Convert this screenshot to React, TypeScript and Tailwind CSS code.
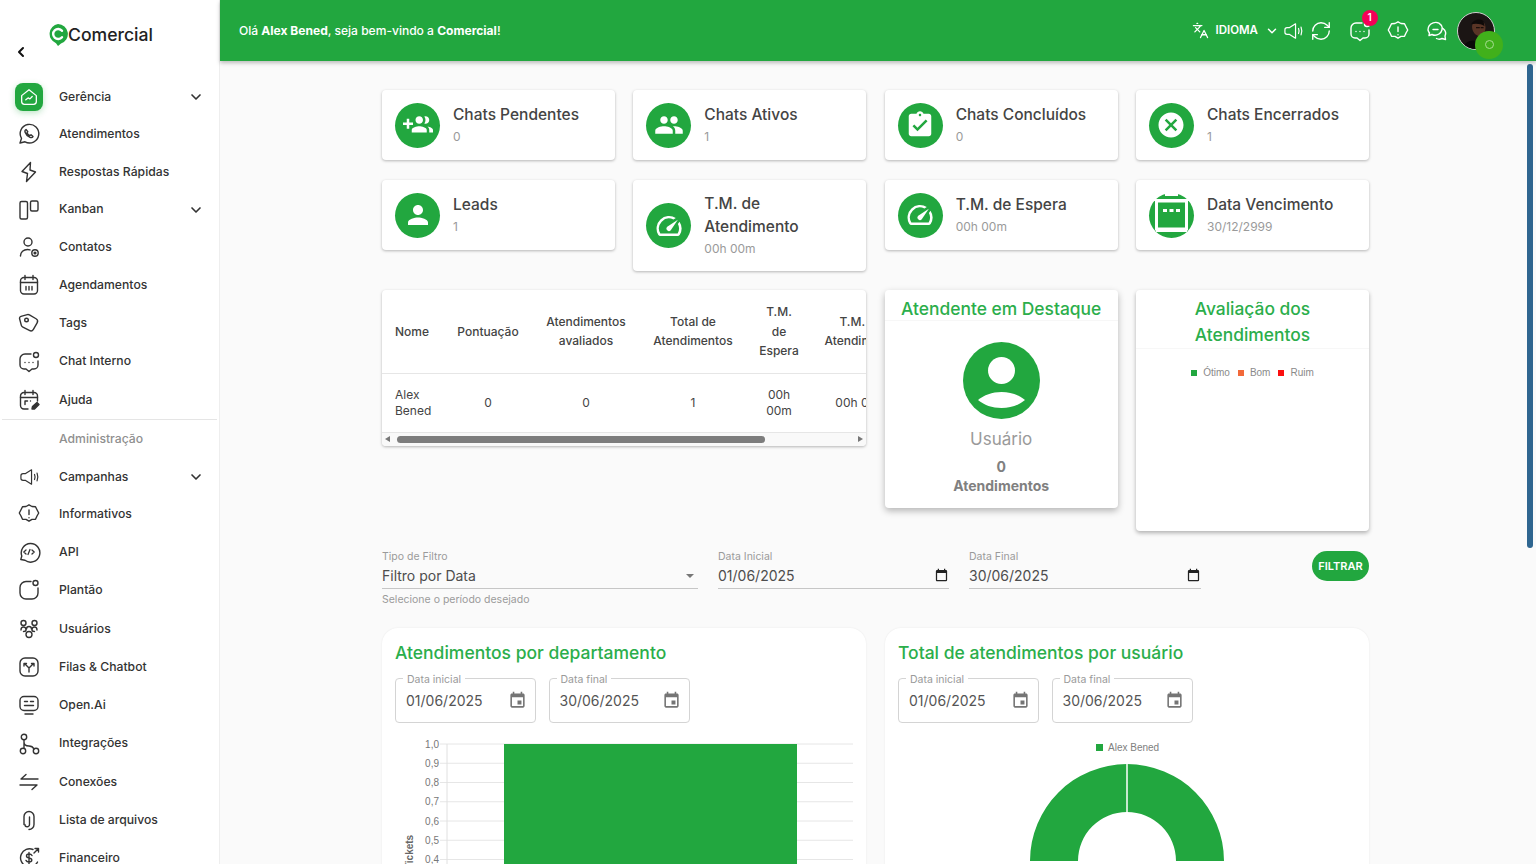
import type { ReactNode } from "react";
import { ChevronDown, ChevronLeft, Languages, RefreshCw } from "lucide-react";

const GREEN = "#22a73f";

function Ico({ children, className = "h-6 w-6 shrink-0" }: { children: ReactNode; className?: string }) {
  return (
    <svg viewBox="0 0 24 24" fill="none" stroke="currentColor" strokeWidth="1.4" strokeLinecap="round" strokeLinejoin="round" className={className}>
      {children}
    </svg>
  );
}

const icons = {
  whatsapp: (
    <Ico>
      <path d="M3 21l1.500-4.600A9.300 9.300 0 1 1 8 19.800L3 21z" />
      <path d="M9 7.500c-1 .6-1.300 1.700-.8 3 .8 2.200 2.600 4 4.800 4.900 1.300.5 2.400.2 3-.8l-2-1.800-1.300.8c-1.200-.6-2.100-1.500-2.700-2.700l.8-1.300L9 7.500z" />
    </Ico>
  ),
  zap: (
    <Ico>
      <path d="M13.500 2.500 5 11.500l5.500 2-1 8 9-9.500-5.500-2 .5-7.500z" />
    </Ico>
  ),
  kanban: (
    <Ico>
      <rect x="3" y="3.500" width="7.500" height="17.500" rx="1.500" />
      <rect x="13.500" y="3" width="7.500" height="10" rx="1.500" />
    </Ico>
  ),
  contact: (
    <Ico>
      <circle cx="11" cy="7" r="4" />
      <path d="M3.500 21c0-3.800 3-6.500 7-6.500 1 0 1.800.1 2.500.4" />
      <circle cx="18" cy="18" r="3.200" />
      <circle cx="18" cy="18" r=".9" fill="currentColor" />
    </Ico>
  ),
  calendar: (
    <Ico>
      <rect x="3.500" y="4.500" width="17" height="16.500" rx="3.500" />
      <path d="M3.500 9.500h17M8 2.500v4M16 2.500v4M9 13.500v3.500M12 13.500v3.500M15 13.500v3.500" />
    </Ico>
  ),
  tag: (
    <Ico>
      <path d="M4 5.500A2 2 0 0 1 6 3.500h6.500a3 3 0 0 1 2 .8l5.400 5.400a3 3 0 0 1 0 4.200l-5.300 5.400a3 3 0 0 1-4.200 0L5 14.500a3 3 0 0 1-1-2.200V5.500z" transform="rotate(-15 12 12)" />
      <circle cx="9.500" cy="9" r="1.800" />
    </Ico>
  ),
  chat: (
    <Ico>
      <path d="M14 4H8a5 5 0 0 0-5 5v6a4 4 0 0 0 4 4h2l3 2.500 3-2.500h2a4 4 0 0 0 4-4v-4" />
      <circle cx="19" cy="5" r="2.500" />
      <path d="M8 12.500h.01M12 12.500h.01M16 12.500h.01" />
    </Ico>
  ),
  help: (
    <Ico>
      <path d="M11 21H7a3.500 3.500 0 0 1-3.500-3.500V8A3.500 3.500 0 0 1 7 4.500h10A3.500 3.500 0 0 1 20.500 8v5" />
      <path d="M3.500 9.500h17M8 2.500v4M16 2.500v4M8 13h2.500M8 13v3.500M13.500 13h.01" />
      <path d="m15 21 .5-2.500 4.500-4 2 2-4.500 4.500-2.500 0z" fill="currentColor" />
    </Ico>
  ),
  speaker: (
    <Ico>
      <g transform="translate(1.800 1.800) scale(.85)">
        <path d="M15 3.500v17l-7-4.500H5a2.500 2.500 0 0 1-2.500-2.500v-3A2.500 2.500 0 0 1 5 8h3l7-4.500z" />
        <path d="M18.500 9c.8 1.800.8 4.200 0 6M21.500 7.500c1.100 2.800 1.100 6.200 0 9" />
      </g>
    </Ico>
  ),
  alert: (
    <Ico>
      <path d="M12 2.800l3 1.700 3.500.2 1.500 3 1.700 3.300-1.700 3-1.500 3.200-3.500.2-3 1.800-3-1.800-3.500-.2-1.500-3.200-1.700-3 1.700-3.300 1.500-3 3.500-.2 3-1.700z" />
      <path d="M12 8v4.500M12 15.800h.01" />
    </Ico>
  ),
  api: (
    <Ico>
      <path d="M3.800 19.500l1-3.500A9.300 9.300 0 1 1 8 20.300l-4.200-.8z" />
      <path d="M9 10l-2.200 2L9 14M15 10l2.200 2-2.200 2M13 9.500l-2 5" strokeWidth="1.300" />
    </Ico>
  ),
  shift: (
    <Ico>
      <path d="M14 3.500H9A6 6 0 0 0 3 9.500v5.500a6 6 0 0 0 6 6h6a6 6 0 0 0 6-6v-5" />
      <circle cx="18.500" cy="5" r="2.500" />
    </Ico>
  ),
  users: (
    <Ico>
      <circle cx="6.500" cy="6" r="2.500" />
      <circle cx="17.500" cy="6" r="2.500" />
      <circle cx="12" cy="17.500" r="3" />
      <path d="M4 13c0-2 1.200-3 2.500-3S9 11 9 13c0 1-1 1.500-2.500 1.500M20 13c0-2-1.200-3-2.500-3S15 11 15 13c0 1 1 1.500 2.500 1.500M9.500 12a2.500 2.500 0 1 1 5 0" />
    </Ico>
  ),
  queues: (
    <Ico>
      <rect x="3" y="3" width="18" height="18" rx="5" />
      <path d="M12 17v-4M12 13 8 9M12 13l4-4M7 11V8.500h2.500M17 11V8.500h-2.500" />
    </Ico>
  ),
  openai: (
    <Ico>
      <rect x="3" y="3.500" width="18" height="14" rx="4" />
      <path d="M7.500 8.500h3M13.500 8.500h3M7.500 12.500h9M8 21h8" />
    </Ico>
  ),
  integrations: (
    <Ico>
      <circle cx="7" cy="5" r="2.700" />
      <circle cx="6" cy="19" r="2.700" />
      <circle cx="19" cy="19" r="2.700" />
      <path d="M7 8v8M7 10c0 3 2 4 5 4 3 0 4 1 5 3" />
    </Ico>
  ),
  connections: (
    <Ico>
      <path d="M21 9H4l5-4.500M3 15h17l-5 4.500" />
    </Ico>
  ),
  clip: (
    <Ico>
      <path d="M12.500 9v7.500a2.300 2.300 0 0 1-4.600 0" />
      <path d="M7 16.500V8.500a5 5 0 0 1 10 0v8a5 5 0 0 1-5 5" />
    </Ico>
  ),
  finance: (
    <Ico>
      <path d="M16 3.500A9 9 0 1 0 20.500 16" />
      <path d="M15 9.500c-.5-1-1.600-1.500-3-1.500-1.500 0-2.500.8-2.500 2s1 1.700 2.500 2 2.800.8 2.800 2-1.200 2-2.800 2c-1.400 0-2.500-.6-3-1.600M12 6.500V18M17 7l4.500-4.500M18 2.500h3.500V6" />
    </Ico>
  ),
};

type NavItem = { label: string; icon: ReactNode; expand?: boolean };

const mainNav: NavItem[] = [
  { label: "Atendimentos", icon: icons.whatsapp },
  { label: "Respostas Rápidas", icon: icons.zap },
  { label: "Kanban", icon: icons.kanban, expand: true },
  { label: "Contatos", icon: icons.contact },
  { label: "Agendamentos", icon: icons.calendar },
  { label: "Tags", icon: icons.tag },
  { label: "Chat Interno", icon: icons.chat },
  { label: "Ajuda", icon: icons.help },
];

const adminNav: NavItem[] = [
  { label: "Campanhas", icon: icons.speaker, expand: true },
  { label: "Informativos", icon: icons.alert },
  { label: "API", icon: icons.api },
  { label: "Plantão", icon: icons.shift },
  { label: "Usuários", icon: icons.users },
  { label: "Filas & Chatbot", icon: icons.queues },
  { label: "Open.Ai", icon: icons.openai },
  { label: "Integrações", icon: icons.integrations },
  { label: "Conexões", icon: icons.connections },
  { label: "Lista de arquivos", icon: icons.clip },
  { label: "Financeiro", icon: icons.finance },
];

function NavRow({ item }: { item: NavItem }) {
  return (
    <div className={item.expand ? "flex h-[36px] items-center pl-[19px] pr-[15px]" : "flex h-[38.3px] items-center pl-[19px] pr-[15px]"}>
      <span className="flex w-5 justify-center text-[#333]">{item.icon}</span>
      <span className="ml-5 flex-1 text-[12.200px] font-medium text-[#333]">{item.label}</span>
      {item.expand && <ChevronDown className="h-4 w-4 text-[#333]" strokeWidth={2.500} />}
    </div>
  );
}

function Sidebar() {
  return (
    <aside className="h-full w-[220px] shrink-0 overflow-hidden border-r border-[#eeeeee] bg-white">
      <div className="h-[79px]">
        <div className="flex items-center pl-[48px] pt-[24px]">
          <svg viewBox="0 0 20 22" className="h-[22px] w-[20px]">
            <path d="M10 0a10 10 0 0 1 3 19.500L10 22l-2-2.800A10 10 0 0 1 10 0z" fill={GREEN} />
            <path d="M14 6.800a5 5 0 1 0 0 6.400" fill="none" stroke="#fff" strokeWidth="2.400" strokeLinecap="round" />
          </svg>
          <span className="text-[17.600px] font-medium leading-[22px] text-[#222]">Comercial</span>
        </div>
        <ChevronLeft className="ml-[13px] mt-[-2px] h-4 w-4 text-[#111]" strokeWidth={3} />
      </div>
      <div className="flex h-[36px] items-center pl-[15px] pr-[15px]">
        <span className="flex h-[28px] w-[28px] items-center justify-center rounded-lg bg-[#22a73f] text-white shadow-[0_2px_6px_rgba(34,167,63,.3)]">
          <Ico className="h-[22px] w-[22px]">
            <path d="M4 10.500 12 4l8 6.500V17a3 3 0 0 1-3 3H7a3 3 0 0 1-3-3v-6.500z" />
            <path d="m8.500 15 2.500-2 2 1 2.500-2.500" />
          </Ico>
        </span>
        <span className="ml-4 flex-1 text-[12.200px] font-medium text-[#333]">Gerência</span>
        <ChevronDown className="h-4 w-4 text-[#333]" strokeWidth={2.500} />
      </div>
      {mainNav.map((item) => (
        <NavRow key={item.label} item={item} />
      ))}
      <div className="mx-[2px] h-px bg-[#e5e5e5]" />
      <div className="flex h-[38.600px] items-center pl-[59px] text-[12.200px] font-medium text-[#8f8f8f]">Administração</div>
      {adminNav.map((item) => (
        <NavRow key={item.label} item={item} />
      ))}
    </aside>
  );
}

function Header() {
  return (
    <header className="relative z-10 flex h-[61px] shrink-0 items-center bg-[#22a73f] pl-[19px] pr-[41px] text-white shadow-[0_2px_4px_rgba(0,0,0,.25)]">
      <p className="flex-1 pt-[1px] text-[12.050px] font-medium">
        Olá <b className="font-bold">Alex Bened</b>, seja bem-vindo a <b className="font-bold">Comercial</b>!
      </p>
      <Languages className="h-[17px] w-[17px]" strokeWidth={1.800} />
      <span className="ml-[7px] text-[11.500px] font-semibold">IDIOMA</span>
      <ChevronDown className="ml-[7px] h-[14px] w-[14px]" strokeWidth={2.500} />
      <span className="ml-[4px] flex w-[19px] justify-center">{icons.speaker}</span>
      <span className="flex w-[38.500px] justify-center">
        <RefreshCw className="h-[22px] w-[22px]" strokeWidth={1.500} />
      </span>
      <span className="relative flex w-[38.500px] justify-center">
        {icons.chat}
        <span className="absolute left-[21px] top-[-9px] flex h-[16px] w-[16px] items-center justify-center rounded-full bg-[#f50057] text-[10px] font-semibold">1</span>
      </span>
      <span className="flex w-[38.500px] justify-center">{icons.alert}</span>
      <span className="flex w-[38.500px] justify-center">
        <Ico>
          <path d="M3 11a7.500 7.500 0 0 1 13.500-4.500C18 9 17 13 14 15c-2.200 1.400-5 1.500-7 .5L4 16.500l.5-2.500A7 7 0 0 1 3 11z" />
          <path d="M8 10.500h5M18 9.500c2.500 2 3.200 5 2 7.500l.5 3.500-3.500-1c-2 1-4 .8-5.500 0" />
        </Ico>
      </span>
      <span className="relative ml-[1px] h-[38px] w-[38px] rounded-full border border-[#cfcfcf] bg-[#1b1514]">
        <svg viewBox="0 0 38 38" className="h-full w-full rounded-full">
          <path d="M15 13c1-4 7-7 11-4 3 2 4 7 2 11-1 3-4 5-7 4-4-1-7-7-6-11z" fill="#5a3526" />
          <path d="M14 12c2-5 10-7 13-3l1 5c-4-3-10-3-14-2z" fill="#0e0a09" />
          <path d="M19 15.500h4M24 15.500h3" stroke="#1a0f0a" strokeWidth="1.200" />
          <path d="M5 38c1-6 6-9 11-9l8 1 6 8H5z" fill="#0b0909" />
        </svg>
        <span className="absolute left-[17px] top-[18px] flex h-[28px] w-[28px] items-center justify-center rounded-full bg-[#41b01b]">
          <span className="h-[9px] w-[9px] rounded-full border border-[#a6dc90]" />
        </span>
      </span>
    </header>
  );
}

const SPEED =
  "M20.380 8.570l-1.230 1.850a8 8 0 0 1-.22 7.580H5.070A8 8 0 0 1 15.580 6.850l1.850-1.230A10 10 0 0 0 3.350 19a2 2 0 0 0 1.720 1h13.850a2 2 0 0 0 1.740-1 10 10 0 0 0-.27-10.440zm-9.790 6.840a2 2 0 0 0 2.830 0l5.660-8.490-8.490 5.660a2 2 0 0 0 0 2.830z";

const stats: { id: string; title: ReactNode; value: string; path: string; tall?: boolean }[] = [
  {
    id: "pendentes",
    title: "Chats Pendentes",
    value: "0",
    path: "M8 10H5V7H3v3H0v2h3v3h2v-3h3v-2zm10 1c1.660 0 2.990-1.340 2.990-3S19.660 5 18 5c-.32 0-.63.05-.91.14.57.81.9 1.790.9 2.860s-.34 2.040-.9 2.860c.28.09.59.14.91.14zm-5 0c1.660 0 2.990-1.340 2.990-3S14.660 5 13 5s-3 1.340-3 3 1.340 3 3 3zm6.620 2.160c.83.73 1.380 1.660 1.380 2.840v2h3v-2c0-1.540-2.370-2.490-4.380-2.840zM13 13c-2 0-6 1-6 3v2h12v-2c0-2-4-3-6-3z",
  },
  {
    id: "ativos",
    title: "Chats Ativos",
    value: "1",
    path: "M16 11c1.660 0 2.990-1.340 2.990-3S17.660 5 16 5c-1.660 0-3 1.340-3 3s1.340 3 3 3zm-8 0c1.660 0 2.990-1.340 2.990-3S9.660 5 8 5C6.340 5 5 6.340 5 8s1.340 3 3 3zm0 2c-2.330 0-7 1.170-7 3.500V19h14v-2.500c0-2.330-4.670-3.500-7-3.500zm8 0c-.29 0-.62.02-.97.05 1.160.84 1.970 1.970 1.970 3.450V19h6v-2.500c0-2.330-4.670-3.500-7-3.500z",
  },
  {
    id: "concluidos",
    title: "Chats Concluídos",
    value: "0",
    path: "M19 3h-4.180C14.400 1.840 13.300 1 12 1c-1.300 0-2.400.84-2.820 2H5c-1.100 0-2 .9-2 2v14c0 1.100.9 2 2 2h14c1.100 0 2-.9 2-2V5c0-1.100-.9-2-2-2zm-7 0c.55 0 1 .45 1 1s-.45 1-1 1-1-.45-1-1 .45-1 1-1zm-2 14l-4-4 1.410-1.410L10 14.170l6.590-6.590L18 9l-8 8z",
  },
  {
    id: "encerrados",
    title: "Chats Encerrados",
    value: "1",
    path: "M12 2C6.470 2 2 6.470 2 12s4.470 10 10 10 10-4.470 10-10S17.530 2 12 2zm5 13.590L15.590 17 12 13.410 8.410 17 7 15.590 10.590 12 7 8.410 8.410 7 12 10.590 15.590 7 17 8.410 13.410 12 17 15.590z",
  },
  {
    id: "leads",
    title: "Leads",
    value: "1",
    path: "M12 12c2.210 0 4-1.790 4-4s-1.790-4-4-4-4 1.790-4 4 1.790 4 4 4zm0 2c-2.670 0-8 1.340-8 4v2h16v-2c0-2.660-5.330-4-8-4z",
  },
  {
    id: "tma",
    title: (
      <>
        T.M. de
        <br />
        Atendimento
      </>
    ),
    value: "00h 00m",
    path: SPEED,
    tall: true,
  },
  { id: "tme", title: "T.M. de Espera", value: "00h 00m", path: SPEED },
  { id: "vencimento", title: "Data Vencimento", value: "30/12/2999", path: "" },
];

function StatCard({ title, value, path, tall }: { title: ReactNode; value: string; path: string; tall?: boolean }) {
  return (
    <div
      className={
        tall
          ? "flex h-[91px] items-center self-start rounded-[4px] bg-white pl-[13px] pr-2 shadow-[0_1px_3px_rgba(0,0,0,.28)]"
          : "flex h-[70px] items-center self-start rounded-[4px] bg-white pl-[13px] pr-2 shadow-[0_1px_3px_rgba(0,0,0,.28)]"
      }
    >
      <span className="flex h-[45px] w-[45px] shrink-0 items-center justify-center rounded-full bg-[#22a73f]">
        {path ? (
          <svg viewBox="0 0 24 24" fill="#fff" className="h-[30px] w-[30px]">
            <path d={path} />
          </svg>
        ) : (
          <svg viewBox="0 0 45 45" className="h-[45px] w-[45px]">
            <path d="M16 0h13v3H16zM5 6h35v2H5z" fill="#fff" />
            <rect x="7.500" y="8" width="30" height="28" fill="none" stroke="#fff" strokeWidth="3" />
            <path d="M7 36h31v3H7zM14 16h4v3h-4zM20.500 16h4v3h-4zM27 16h4v3h-4z" fill="#fff" />
          </svg>
        )}
      </span>
      <div className="ml-[13px] min-w-0">
        <h3 className="text-[15.500px] font-medium leading-[22.500px] text-[#444]">{title}</h3>
        <p className="mt-[1.500px] text-[12px] leading-[18px] text-[#9a9a9a]">{value}</p>
      </div>
    </div>
  );
}

function RankTable() {
  return (
    <div className="col-span-2 self-start overflow-hidden rounded-[4px] bg-white shadow-[0_1px_3px_rgba(0,0,0,.28)]">
      <div className="overflow-hidden">
        <table className="w-[528px] table-fixed text-center text-[12px] text-[#444]">
          <colgroup>
            <col className="w-[62px]" />
            <col className="w-[88px]" />
            <col className="w-[108px]" />
            <col className="w-[106px]" />
            <col className="w-[66px]" />
            <col className="w-[98px]" />
          </colgroup>
          <thead>
            <tr className="h-[83px] border-b border-[#e6e6e6] font-medium leading-[19.500px]">
              <th className="pl-[13px] text-left font-medium">Nome</th>
              <th className="font-medium">Pontuação</th>
              <th className="font-medium">
                Atendimentos
                <br />
                avaliados
              </th>
              <th className="font-medium">
                Total de
                <br />
                Atendimentos
              </th>
              <th className="font-medium">
                T.M.
                <br />
                de
                <br />
                Espera
              </th>
              <th className="font-medium">
                T.M. de
                <br />
                Atendimento
              </th>
            </tr>
          </thead>
          <tbody>
            <tr className="h-[59px] border-b border-[#e6e6e6] leading-[16px]">
              <td className="pl-[13px] text-left">
                Alex
                <br />
                Bened
              </td>
              <td>0</td>
              <td>0</td>
              <td>1</td>
              <td>
                00h
                <br />
                00m
              </td>
              <td>00h 00m</td>
            </tr>
          </tbody>
        </table>
      </div>
      <div className="flex h-[13px] items-center bg-[#f9f9f9] px-[3px]">
        <span className="h-0 w-0 border-y-[3.500px] border-r-[5px] border-y-transparent border-r-[#777]" />
        <span className="ml-[7px] h-[7px] w-[368px] rounded-full bg-[#7d7d7d]" />
        <span className="ml-auto h-0 w-0 border-y-[3.500px] border-l-[5px] border-y-transparent border-l-[#777]" />
      </div>
    </div>
  );
}

function FeaturedCard() {
  return (
    <div className="flex h-[218px] flex-col items-center self-start rounded-[4px] bg-white shadow-[0_3px_7px_rgba(0,0,0,.28)]">
      <h3 className="h-[31px] w-full border-b border-[#f7f7f7] pt-[6px] text-center text-[17.400px] font-medium leading-[26px] text-[#2bae4b]">Atendente em Destaque</h3>
      <svg viewBox="0 0 77 77" className="mt-[21px] h-[77px] w-[77px]">
        <circle cx="38.500" cy="38.500" r="38.500" fill={GREEN} />
        <circle cx="38.500" cy="28.500" r="13.500" fill="#fff" />
        <path d="M15 58c6-5 14-8 23.500-8S56 53 62 58c-6 5-14 8-23.500 8S21 63 15 58z" fill="#fff" />
      </svg>
      <p className="mt-[8px] text-[17px] leading-[24px] text-[#9a9a9a]">Usuário</p>
      <p className="mt-[6px] text-[14px] font-bold leading-[19px] text-[#808080]">0</p>
      <p className="text-[14px] font-bold leading-[19px] text-[#808080]">Atendimentos</p>
    </div>
  );
}

function RatingCard() {
  const legend = [
    { label: "Ótimo", color: "bg-[#22a73f]" },
    { label: "Bom", color: "bg-[#f2693a]" },
    { label: "Ruim", color: "bg-[#fb0f0f]" },
  ];
  return (
    <div className="h-[241px] self-start rounded-[4px] bg-white shadow-[0_2px_4px_rgba(0,0,0,.3)]">
      <h3 className="border-b border-[#f7f7f7] pt-[6px] text-center text-[17.400px] font-medium leading-[26px] text-[#2bae4b]">
        Avaliação dos
        <br />
        Atendimentos
      </h3>
      <div className="mt-[18px] flex justify-center gap-[8px] font-['Liberation_Sans',sans-serif] text-[10px] leading-[12px] text-[#8a8a8a]">
        {legend.map((l) => (
          <span key={l.label} className="flex items-center gap-[6px]">
            <i className={`h-[6px] w-[6px] ${l.color}`} />
            {l.label}
          </span>
        ))}
      </div>
    </div>
  );
}

function NativeCalendar() {
  return (
    <svg viewBox="0 0 24 24" fill="#222" className="h-[15px] w-[15px] shrink-0">
      <path d="M19 3h-1V1h-2v2H8V1H6v2H5a2 2 0 0 0-2 2v14c0 1.100.9 2 2 2h14a2 2 0 0 0 2-2V5a2 2 0 0 0-2-2zm0 16H5V8h14v11z" />
    </svg>
  );
}

function FilterField({ label, value, className, helper, select }: { label: string; value: string; className: string; helper?: string; select?: boolean }) {
  return (
    <div className={className}>
      <p className="pt-[1px] text-[10.500px] leading-[12px] text-[#9a9a9a]">{label}</p>
      <div className="mt-[3px] flex h-[23px] items-center justify-between border-b-[1.500px] border-[#c6c6c6] pb-[3px] text-[14px] text-[#4d4d4d]">
        <span>{value}</span>
        {select ? <span className="mr-[4px] h-0 w-0 border-x-[4px] border-t-[4px] border-x-transparent border-t-[#777]" /> : <NativeCalendar />}
      </div>
      {helper && <p className="mt-[4px] text-[10.500px] leading-[14px] text-[#9a9a9a]">{helper}</p>}
    </div>
  );
}

function OutlinedDate({ label, value }: { label: string; value: string }) {
  return (
    <div className="relative flex h-[45px] w-[141px] items-center justify-between rounded-[4px] border border-[#d4d4d4] pl-[10px] pr-[8px] text-[14px] text-[#555]">
      <span className="absolute left-[7px] top-[-5px] bg-white px-[4px] text-[10.500px] leading-[12px] text-[#9a9a9a]">{label}</span>
      <span>{value}</span>
      <svg viewBox="0 0 24 24" fill="#757575" className="h-[19px] w-[19px]">
        <path d="M17 12h-5v5h5v-5zM16 1v2H8V1H6v2H5c-1.110 0-1.990.9-1.990 2L3 19c0 1.100.89 2 2 2h14c1.100 0 2-.9 2-2V5c0-1.100-.9-2-2-2h-1V1h-2zm3 18H5V8h14v11z" />
      </svg>
    </div>
  );
}

function ChartCard({ title, children }: { title: string; children: ReactNode }) {
  return (
    <section className="h-[300px] rounded-[16px] bg-white pt-[13px] shadow-[0_0_2px_rgba(0,0,0,.08)]">
      <h2 className="pl-[13px] text-[17.500px] font-medium leading-[24px] text-[#2bae4b]">{title}</h2>
      <div className="ml-[13px] mt-[13px] flex gap-[12.500px]">
        <OutlinedDate label="Data inicial" value="01/06/2025" />
        <OutlinedDate label="Data final" value="30/06/2025" />
      </div>
      {children}
    </section>
  );
}

function BarChart() {
  const ticks = ["1,0", "0,9", "0,8", "0,7", "0,6", "0,5", "0,4"];
  return (
    <svg viewBox="0 0 484 130" className="mt-[12px] h-[130px] w-[484px] font-['Liberation_Sans',sans-serif]">
      {ticks.map((t, i) => {
        const y = 9 + i * 19.250;
        return (
          <g key={t}>
            <line x1="58" x2="471" y1={y} y2={y} stroke="#e6e6e6" />
            <text x="57" y={y + 3.500} textAnchor="end" fontSize="10" fill="#777">
              {t}
            </text>
          </g>
        );
      })}
      <line x1="65" x2="65" y1="9" y2="130" stroke="#e0e0e0" />
      <rect x="122" y="9" width="293" height="121" fill={GREEN} />
      <text transform="translate(30.500 117) rotate(-90)" textAnchor="middle" fontSize="10" fontWeight="700" fill="#666">
        Tickets
      </text>
    </svg>
  );
}

function Doughnut() {
  return (
    <svg viewBox="0 0 484 130" className="mt-[12px] h-[130px] w-[484px] font-['Liberation_Sans',sans-serif]">
      <rect x="211" y="9" width="7" height="7" fill={GREEN} />
      <text x="223" y="16" fontSize="10" fill="#808080">
        Alex Bened
      </text>
      <path d="M145 126a97 97 0 0 1 194 0h-48a49 49 0 0 0-98 0z" fill={GREEN} />
      <line x1="242" x2="242" y1="28" y2="77" stroke="#fff" strokeWidth="1.500" />
    </svg>
  );
}

export default function App() {
  return (
    <div className="flex h-screen overflow-hidden bg-[#fafafa] font-['Inter',sans-serif]">
      <Sidebar />
      <div className="flex min-w-0 flex-1 flex-col">
        <Header />
        <main className="relative min-h-0 flex-1 overflow-hidden pl-[162px] pt-[29px]">
          <div className="w-[987px]">
            <div className="grid grid-cols-4 grid-rows-[90px_110px_auto] gap-x-[18.330px]">
              {stats.map(({ id, ...s }) => (
                <StatCard key={id} {...s} />
              ))}
              <RankTable />
              <FeaturedCard />
              <RatingCard />
            </div>
            <div className="mt-[19px] flex h-[78px] items-start">
              <FilterField className="w-[316px]" label="Tipo de Filtro" value="Filtro por Data" helper="Selecione o período desejado" select />
              <FilterField className="ml-[20px] w-[231px]" label="Data Inicial" value="01/06/2025" />
              <FilterField className="ml-[20px] w-[232px]" label="Data Final" value="30/06/2025" />
              <button className="ml-auto mt-[1px] h-[30px] w-[57px] rounded-full bg-[#22a73f] text-[11px] font-semibold text-white">FILTRAR</button>
            </div>
            <div className="grid grid-cols-2 gap-x-[19px]">
              <ChartCard title="Atendimentos por departamento">
                <BarChart />
              </ChartCard>
              <ChartCard title="Total de atendimentos por usuário">
                <Doughnut />
              </ChartCard>
            </div>
          </div>
          <span className="absolute right-[3px] top-[3px] h-[484px] w-[6px] rounded-full bg-[#2f6690]" />
        </main>
      </div>
    </div>
  );
}
